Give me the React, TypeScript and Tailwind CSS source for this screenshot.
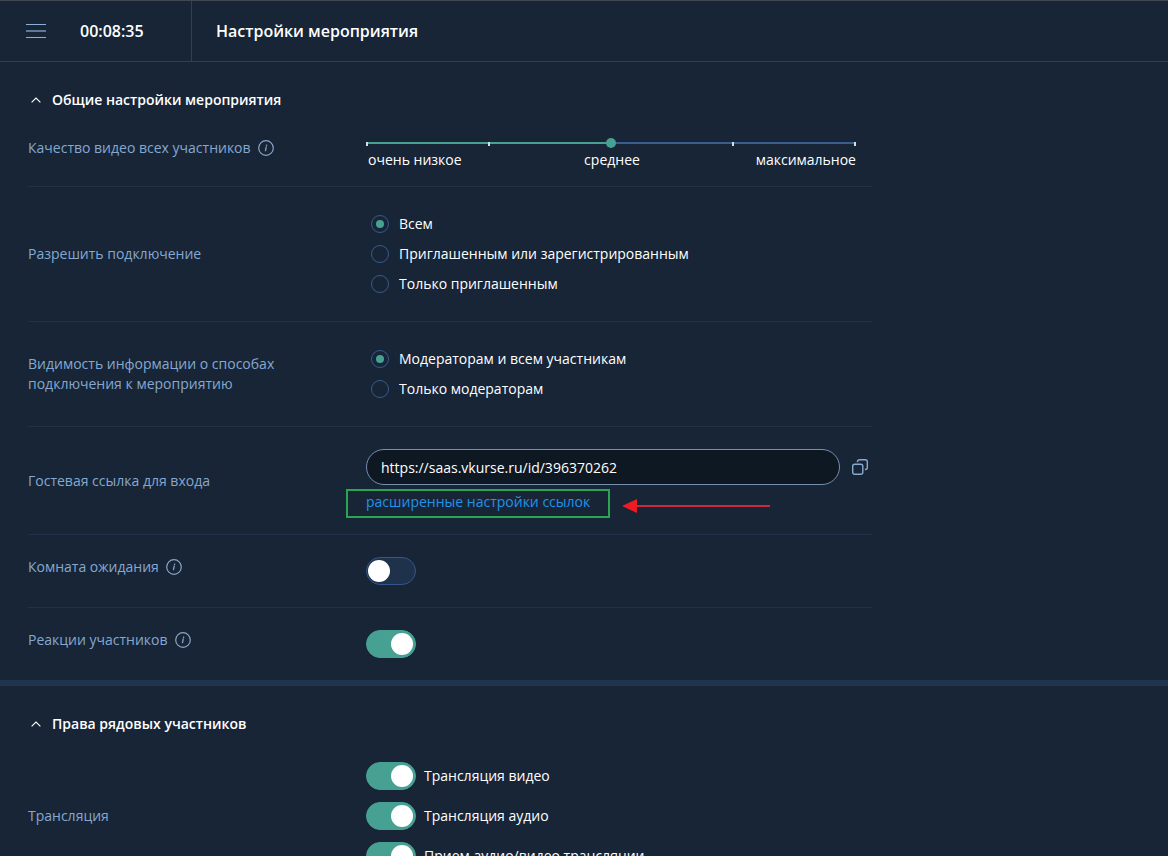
import type { ReactNode } from "react";

function InfoButton({ label }: { label: string }) {
  return (
    <button type="button" aria-label={label} className="shrink-0 text-[#8aa5c6]">
      <svg width="16" height="16" viewBox="0 0 16 16" fill="none" stroke="currentColor">
        <circle cx="8" cy="8" r="7.3" strokeWidth="1.2" />
        <path d="M8.2 7 7.5 10.6" strokeWidth="1.3" strokeLinecap="round" />
        <circle cx="8.6" cy="5.2" r="0.8" fill="currentColor" stroke="none" />
      </svg>
    </button>
  );
}

type RowProps = {
  label: string;
  info?: boolean;
  align?: "center" | "start";
  last?: boolean;
  children: ReactNode;
};

function Row({ label, info, align = "center", last, children }: RowProps) {
  return (
    <div
      className={`mx-7 flex max-w-[844px] py-[22px] ${align === "center" ? "items-center" : "items-start"} ${
        last ? "" : "border-b border-[#20324a]"
      }`}
    >
      <div className="flex w-[338px] shrink-0 items-center gap-[7px] pr-16 text-[#86a8d0]">
        <span>{label}</span>
        {info && <InfoButton label={`${label}: справка`} />}
      </div>
      <div className="min-w-0 flex-1">{children}</div>
    </div>
  );
}

function SectionTitle({ children }: { children: ReactNode }) {
  return (
    <h2 className="px-7 pt-7 font-semibold text-white">
      <button type="button" aria-expanded="true" className="flex items-center gap-2">
        <svg width="16" height="16" viewBox="0 0 16 16" fill="none" stroke="currentColor">
          <path d="M3.6 10.4 8 6l4.4 4.4" strokeWidth="1.1" />
        </svg>
        {children}
      </button>
    </h2>
  );
}

type RadioGroupProps = { name: string; label: string; options: string[] };

function RadioGroup({ name, label, options }: RadioGroupProps) {
  return (
    <div role="radiogroup" aria-label={label} className="pl-[5px]">
      {options.map((option, index) => (
        <label key={option} className="flex h-[30px] items-center gap-2.5">
          <input
            type="radio"
            name={name}
            defaultChecked={index === 0}
            className="grid size-[18px] appearance-none place-items-center rounded-full border border-[#375b8b] before:size-2 before:rounded-full checked:before:bg-[#46a192]"
          />
          {option}
        </label>
      ))}
    </div>
  );
}

function Toggle({ on, label }: { on?: boolean; label: string }) {
  return (
    <input
      type="checkbox"
      role="switch"
      aria-label={label}
      defaultChecked={on}
      className="flex h-7 w-[50px] shrink-0 appearance-none items-center rounded-full border border-[#34568a] bg-[#1f324c] px-px before:size-[22px] before:rounded-full before:bg-white checked:justify-end checked:border-[#46a192] checked:bg-[#46a192] checked:px-0.5"
    />
  );
}

function QualitySlider() {
  return (
    <div className="pr-4">
      <div className="relative flex h-[22px] items-center">
        <input
          type="range"
          min={0}
          max={4}
          defaultValue={2}
          aria-label="Качество видео всех участников"
          className="h-0.5 w-full appearance-none bg-linear-to-r from-[#46a192] from-50% to-[#3b5d8c] to-50% [&::-webkit-slider-thumb]:relative [&::-webkit-slider-thumb]:size-2.5 [&::-webkit-slider-thumb]:appearance-none [&::-webkit-slider-thumb]:rounded-full [&::-webkit-slider-thumb]:bg-[#46a192]"
        />
        <div className="pointer-events-none absolute inset-x-0 top-2.5 flex justify-between">
          <span className="h-1 w-0.5 bg-[#d5dde6]" />
          <span className="h-1 w-0.5 bg-[#d5dde6]" />
          <span className="w-0.5" />
          <span className="h-1 w-0.5 bg-[#d5dde6]" />
          <span className="h-1 w-0.5 bg-[#d5dde6]" />
        </div>
      </div>
      <div className="-mt-1 grid grid-cols-3 pl-0.5">
        <span>очень низкое</span>
        <span className="text-center">среднее</span>
        <span className="text-right">максимальное</span>
      </div>
    </div>
  );
}

const permissions = ["Трансляция видео", "Трансляция аудио", "Прием аудио/видео трансляции"];

export default function App() {
  return (
    <div className="flex h-screen flex-col border-t border-[#3f474f] bg-[#172537] font-['Open_Sans','Noto_Sans',sans-serif] text-sm leading-5 text-white">
      <header className="flex h-[61px] shrink-0 border-b border-[#27425d] text-base font-semibold">
        <div className="flex w-48 shrink-0 items-center gap-[34px] border-r border-[#27425d] pl-[26px]">
          <button type="button" aria-label="Меню" className="text-[#8db0d8]">
            <svg width="20" height="16" viewBox="0 0 20 16" fill="none" stroke="currentColor">
              <path d="M0 1.5h20M0 14.5h20" />
              <path d="M0 8h20" strokeWidth="2" strokeOpacity="0.6" />
            </svg>
          </button>
          <time>00:08:35</time>
        </div>
        <h1 className="flex items-center pl-6">Настройки мероприятия</h1>
      </header>

      <main className="min-h-0 flex-1 overflow-y-auto [scrollbar-width:none]">
        <section className="border-b-6 border-[#20344d]">
          <SectionTitle>Общие настройки мероприятия</SectionTitle>

          <div className="mx-7 flex max-w-[844px] border-b border-[#20324a] pt-[22px] pb-4">
            <div className="flex h-8 w-[338px] shrink-0 items-center gap-[7px] text-[#86a8d0]">
              <span>Качество видео всех участников</span>
              <InfoButton label="Качество видео: справка" />
            </div>
            <div className="min-w-0 flex-1">
              <QualitySlider />
            </div>
          </div>

          <Row label="Разрешить подключение">
            <RadioGroup
              name="access"
              label="Разрешить подключение"
              options={["Всем", "Приглашенным или зарегистрированным", "Только приглашенным"]}
            />
          </Row>

          <Row label="Видимость информации о способах подключения к мероприятию">
            <RadioGroup
              name="visibility"
              label="Видимость информации"
              options={["Модераторам и всем участникам", "Только модераторам"]}
            />
          </Row>

          <Row label="Гостевая ссылка для входа">
            <div className="flex items-center gap-3 pr-1">
              <input
                type="text"
                aria-label="Гостевая ссылка для входа"
                defaultValue="https://saas.vkurse.ru/id/396370262"
                className="h-9 min-w-0 flex-1 rounded-full border border-[#7690b0] bg-[#0e1822] px-3.5 text-white"
              />
              <button type="button" aria-label="Скопировать ссылку" className="text-[#8aa9cf]">
                <svg width="16" height="16" viewBox="0 0 16 16" fill="none" stroke="currentColor" strokeWidth="1.4">
                  <rect x="0.7" y="5.2" width="10.1" height="10.1" rx="2" />
                  <path d="M5.5 3.2v-.5a2 2 0 0 1 2-2h5.8a2 2 0 0 1 2 2v5.8a2 2 0 0 1-2 2h-.4" />
                </svg>
              </button>
            </div>
            <div className="relative mt-[7px] flex w-fit">
              <a href="#links" className="text-[#2293e6]">
                расширенные настройки ссылок
              </a>
              <div className="pointer-events-none absolute -inset-x-5 -top-[3px] -bottom-1.5 border-2 border-[#2aa551]" />
              <svg
                className="pointer-events-none absolute top-[7px] left-full ml-8"
                width="148"
                height="14"
                viewBox="0 0 148 14"
              >
                <path d="M14 7h134" stroke="#c92a38" strokeWidth="2" />
                <path d="M0 7 15 0v14z" fill="#ed1c24" />
              </svg>
            </div>
          </Row>

          <Row label="Комната ожидания" info align="start">
            <Toggle label="Комната ожидания" />
          </Row>

          <Row label="Реакции участников" info align="start" last>
            <Toggle on label="Реакции участников" />
          </Row>
        </section>

        <section>
          <SectionTitle>Права рядовых участников</SectionTitle>

          <Row label="Трансляция" last>
            {permissions.map((permission) => (
              <label key={permission} className="flex h-10 items-center gap-2">
                <Toggle on label={permission} />
                {permission}
              </label>
            ))}
          </Row>
        </section>
      </main>
    </div>
  );
}
